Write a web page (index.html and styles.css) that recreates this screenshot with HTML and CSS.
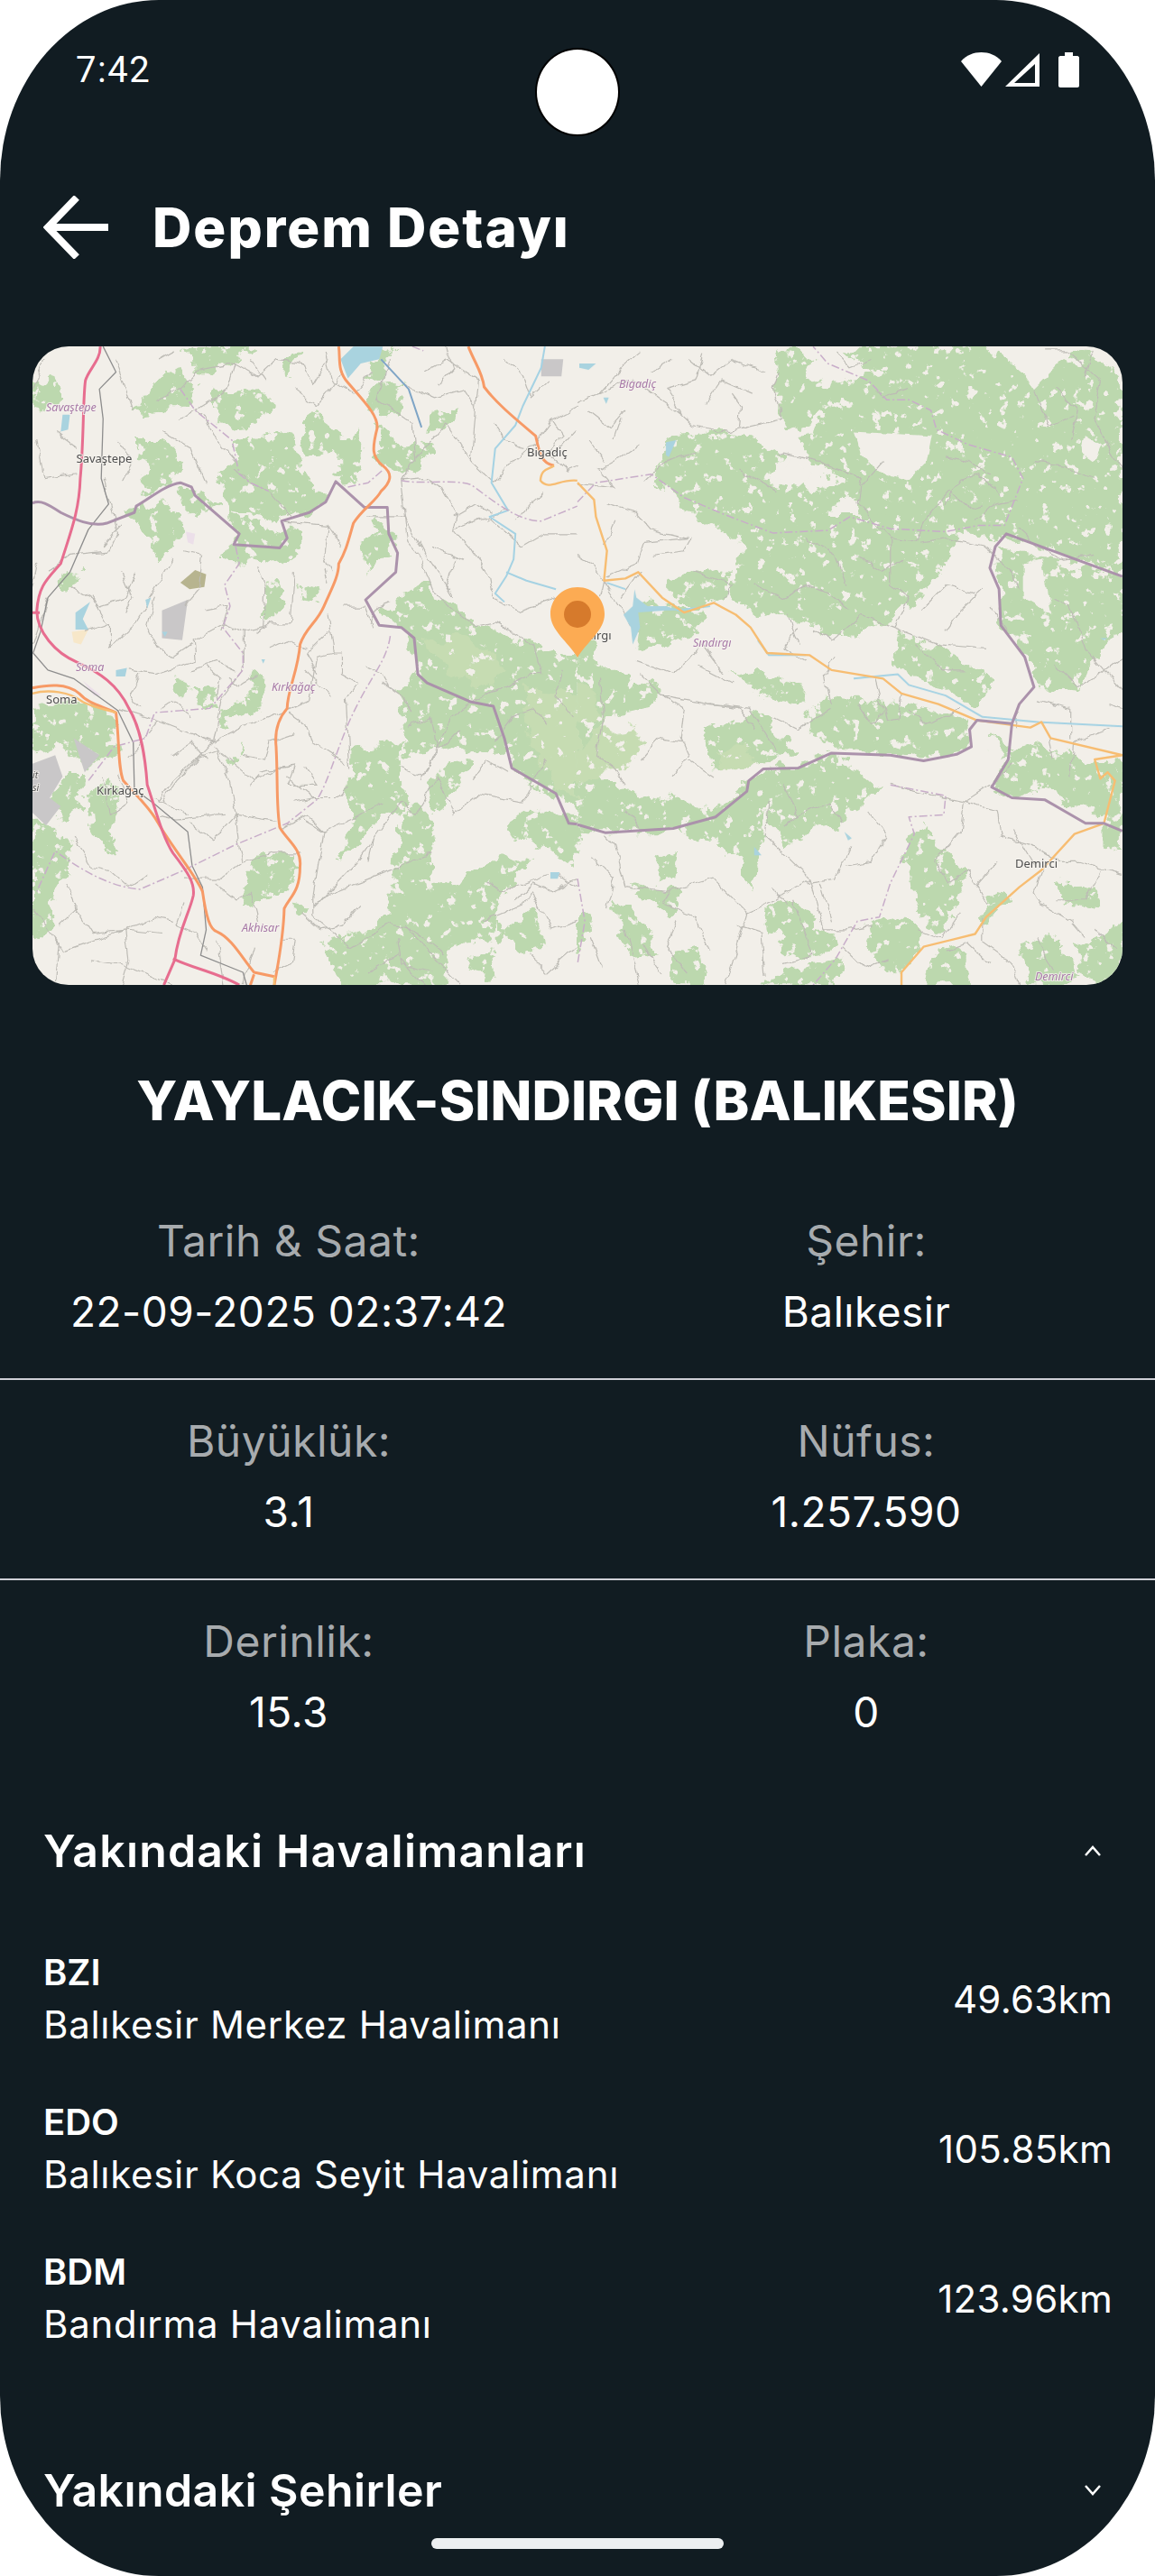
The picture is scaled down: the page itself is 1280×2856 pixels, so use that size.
FILE: index.html
```html
<!DOCTYPE html>
<html lang="tr">
<head>
<meta charset="utf-8">
<title>Deprem Detayı</title>
<link rel="stylesheet" href="styles.css">
</head>
<body>
<main class="screen">
  <header class="status">
    <span class="clock">7:42</span>
    <div class="status-icons">
      <svg class="ic-wifi" viewBox="0 0 45 38"><path d="M0 10C6 3 14 0 22.500 0S39 3 45 10L22.500 38Z"/></svg>
      <svg class="ic-signal" viewBox="0 0 38 37"><path fill-rule="evenodd" d="M38 0V37H0ZM33 12 10 33H33Z"/></svg>
      <svg class="ic-battery" viewBox="0 0 23 39"><path d="M7 0H16V4H21C22 4 23 5 23 6V37C23 38 22 39 21 39H2C1 39 0 38 0 37V6C0 5 1 4 2 4H7Z"/></svg>
    </div>
  </header>
  <div class="punch"></div>

  <nav class="appbar">
    <svg class="back" viewBox="0 0 72 70"><path d="M72 35H6M37 2 5 35 37 68"/></svg>
    <h1 class="appbar-title">Deprem Detayı</h1>
  </nav>

  <section class="map">
    <svg class="map-svg" viewBox="0 0 1208 708" preserveAspectRatio="none">
      <defs>
        <filter id="rough" x="-2%" y="-2%" width="104%" height="104%">
          <feTurbulence type="fractalNoise" baseFrequency="0.05" numOctaves="4" seed="7" result="n"/>
          <feDisplacementMap in="SourceGraphic" in2="n" scale="26" xChannelSelector="R" yChannelSelector="G" result="d"/>
          <feTurbulence type="fractalNoise" baseFrequency="0.085" numOctaves="4" seed="3" result="h"/>
          <feColorMatrix in="h" type="matrix" values="0 0 0 0 0 0 0 0 0 0 0 0 0 0 0 0 0 0 -16 11.300" result="m"/>
          <feComposite in="d" in2="m" operator="in"/>
          <feGaussianBlur stdDeviation="0.4"/>
        </filter>
        <filter id="wobble" x="-2%" y="-2%" width="104%" height="104%">
          <feTurbulence type="fractalNoise" baseFrequency="0.07" numOctaves="2" seed="11" result="n"/>
          <feDisplacementMap in="SourceGraphic" in2="n" scale="9" xChannelSelector="R" yChannelSelector="G"/>
          <feGaussianBlur stdDeviation="0.35"/>
        </filter>
        <filter id="soft" x="-2%" y="-2%" width="104%" height="104%">
          <feGaussianBlur stdDeviation="0.45"/>
        </filter>
      </defs>
      <rect class="m-land" width="1208" height="708"/>

      <!-- forests -->
      <g class="m-forest" filter="url(#rough)">
        <g transform="translate(-36 -14) scale(.408 .472)">
          <path d="M88 110 150 105 165 150 120 190 88 185ZM505 40 560 30 690 30 660 60 590 90 530 85 525 60ZM765 60 820 50 790 100 765 85ZM1000 70 1070 30 1040 100 990 110ZM450 80 510 100 530 140 490 180 360 190 400 140ZM580 135 700 130 750 170 690 215 620 220 570 170ZM850 180 930 230 900 280 830 300 820 220ZM1040 110 1100 120 1070 190 1010 185 1010 140ZM360 250 440 250 500 300 470 340 390 380 380 340 400 310ZM640 250 790 225 810 300 860 370 880 380 830 420 770 430 720 440 620 420 595 350 590 320 635 300ZM910 250 980 230 990 300 950 350 910 330ZM1020 210 1100 270 1160 250 1165 290 1100 330 1020 290ZM1170 190 1235 180 1200 225 1165 235ZM480 360 550 370 595 400 530 430 490 400ZM330 420 440 395 490 430 480 490 430 540 410 480ZM620 420 700 460 760 450 820 480 810 520 770 540 600 525 640 480ZM975 490 1030 440 1060 470 1070 515 990 555ZM725 580 775 600 745 670 720 670ZM805 585 860 600 865 630 820 625ZM170 570 215 550 210 575 175 600Z"/>
          <path d="M1040 660 1090 610 1170 580 1180 610 1290 680 1360 700 1440 730 1568 760 1568 1120 1510 1090 1400 1020 1370 980 1290 990 1200 970 1100 990 1085 870 1130 790 1095 700ZM955 970 1090 960 1100 1110 1010 1160 960 1210 920 1240 950 1160ZM1075 830 1130 800 1160 850 1090 880ZM1160 1050 1240 1000 1280 1010 1180 1130ZM1090 1120 1160 1120 1180 1200 1170 1300 1250 1280 1350 1230 1440 1230 1350 1340 1330 1420 1220 1440 1210 1530 930 1530 870 1420 1020 1400 1060 1340ZM1380 1140 1420 1120 1568 1130 1568 1250 1510 1230 1400 1190Z"/>
          <path d="M88 880 220 860 310 900 320 980 240 1020 170 970 88 985ZM170 1040 230 1040 225 1110 165 1150 135 1100ZM235 1080 300 1040 320 1100 300 1170 330 1210 290 1220 240 1140ZM88 1150 150 1150 205 1230 130 1340 160 1400 88 1420ZM680 1235 810 1215 805 1290 720 1330 650 1355ZM480 810 525 830 490 855 470 845ZM680 800 715 810 720 880 660 900 600 920 590 890 680 860ZM530 830 590 830 590 880 550 890ZM620 1000 660 960 645 1000 630 1010ZM1380 1410 1450 1350 1480 1430 1400 1450ZM1270 1470 1330 1440 1340 1510 1280 1500ZM1340 1370 1380 1410 1350 1440ZM780 1340 830 1345 800 1365Z"/>
        </g>
        <g transform="translate(604 -14) scale(.408 .472)">
          <path d="M250 240 290 235 480 240 560 295 515 350 640 370 740 345 690 430 800 430 830 370 960 350 1000 370 1130 380 1130 430 1200 450 1130 490 1100 470 1060 460 990 540 930 620 880 650 840 680 700 720 620 680 520 650 470 665 415 625 430 540 440 480 380 460 290 420 205 335ZM540 30 640 60 620 100 680 130 670 190 570 230 545 200 545 130Z"/>
          <path d="M650 130 800 90 720 30 1110 30 1240 90 1380 35 1480 110 1480 570 1160 470 1100 470 940 450 760 420 720 350 640 300 600 250 670 200ZM1140 510 1480 570 1480 690 1400 770 1370 840 1250 830 1215 760 1150 680 1145 600ZM870 700 980 735 1060 770 1130 820 1080 880 1000 840 900 800 860 760ZM620 890 700 850 800 870 900 870 1060 905 1060 975 900 990 700 975 650 940ZM410 800 500 790 610 830 600 870 530 860ZM0 800 70 770 120 810 220 830 200 880 60 900 0 900ZM0 600 60 770 30 800 0 780Z"/>
          <path d="M0 1000 130 1080 380 1110 460 1060 490 1030 700 990 830 1070 700 1150 560 1200 550 1180 520 1120 500 1220 470 1310 430 1240 370 1190 280 1170 0 1170ZM340 930 500 890 560 950 600 990 380 1030 370 980ZM1120 940 1150 1000 1250 960 1420 1010 1480 1000 1480 1170 1430 1200 1430 1140 1260 1070 1170 1090 1130 1065 1180 980ZM890 1210 930 1155 990 1200 1060 1260 1000 1400 960 1400 900 1300ZM220 1230 275 1210 265 1280 210 1290ZM90 1330 140 1340 230 1450 130 1460ZM0 1360 40 1370 20 1440 0 1450ZM140 1290 280 1310 250 1370 170 1320ZM510 1340 590 1330 700 1440 600 1470 520 1410ZM780 1380 880 1360 940 1420 880 1500 790 1470ZM260 1460 330 1450 350 1530 260 1530ZM950 1530 970 1450 1050 1440 1060 1530ZM1200 1430 1300 1420 1370 1500 1320 1530 1230 1530ZM1350 1440 1480 1380 1480 1500 1400 1530ZM1290 1290 1400 1300 1420 1350 1330 1340ZM1430 1160 1480 1170 1480 1215 1430 1210ZM490 1530 600 1490 720 1470 700 1530ZM250 570 410 545 420 590 370 640 290 640 260 600ZM170 620 230 650 340 650 330 700 170 740 150 720ZM1090 1370 1140 1310 1180 1320 1110 1390ZM0 900 60 900 60 1010 0 1010Z"/>
        </g>
      </g>

      <!-- clearings and paler woodland -->
      <g class="m-clear" filter="url(#wobble)">
        <g transform="translate(604 -14) scale(.408 .472)">
          <path d="M750 230 960 240 945 305 900 345 810 320 770 280ZM1210 540 1260 530 1290 660 1210 620ZM1130 30 1210 90 1240 130 1320 60 1300 30ZM1380 240 1420 260 1400 300 1370 280ZM530 340 590 290 640 330 600 360Z"/>
        </g>
      </g>
      <g class="m-pale" filter="url(#rough)">
        <g transform="translate(-36 -14) scale(.408 .472)">
          <path d="M1150 720 1270 710 1380 790 1340 830 1220 800ZM1430 830 1568 850 1568 1090 1500 1060 1450 980Z"/>
        </g>
        <g transform="translate(604 -14) scale(.408 .472)">
          <path d="M0 810 40 830 50 900 0 920ZM60 930 130 920 190 960 160 1010 70 1020 30 1060 0 1050 0 990ZM390 980 470 960 480 1010 385 1030Z"/>
        </g>
      </g>

      <g class="m-urban" filter="url(#soft)">
        <g transform="translate(-36 -14) scale(.408 .472)">
          <path d="M88 1010 150 990 170 1040 135 1090 165 1110 125 1155 88 1125ZM200 950 270 990 230 1030ZM1470 60 1530 60 1525 100 1470 100ZM440 650 510 625 495 720 440 715Z"/>
          <path class="m-olive" d="M490 585 530 555 560 565 555 595 515 600Z"/>
          <path class="m-pinkish" d="M505 465 530 470 525 495 510 490ZM225 815 275 850 255 850Z"/>
          <path class="m-sand" d="M195 700 240 695 220 730 200 725Z"/>
        </g>
      </g>

      <!-- minor roads -->
      <g class="m-minor" filter="url(#wobble)">
        <g transform="translate(-36 -14) scale(.408 .472)">
          <path d="M280 340 320 470 300 510 190 520 130 560M100 250 120 340 210 330M420 160 490 130 540 85 640 70 700 100 750 60 830 70 850 120 890 60M530 180 560 200 590 250 640 300M640 70 620 130 490 200M280 500 330 450M470 530 430 590 360 690 300 740M700 545 720 600 715 690 660 700 660 790 600 860 580 960 480 1050 440 1100 420 1090M660 700 610 680 525 720 530 770 420 800 350 790M800 560 790 680 740 680 700 700M880 550 890 590M890 660 905 750 930 750 930 800 970 820 940 860 950 1020M1000 680 1030 640 1060 630M905 750 860 760 840 860 790 880 670 920 580 960M780 890 830 920 850 960 940 1010M580 970 690 1050 760 1020 800 1015 780 1060 860 1060 830 1020M610 1130 480 1140 430 1130M640 1130 750 1145M640 1130 650 1210 660 1240 600 1280 500 1280M880 1170 850 1320 850 1370 950 1440 1060 1385 1120 1400 1210 1460M1170 1220 1000 1280 880 1320 850 1350M1090 1020 1150 1040 1230 900 1290 860 1440 800 1470 800M1470 800 1450 730 1350 680 1290 690 1220 640 1180 610 1140 520 1110 490 1090 345 1160 340 1200 360 1240 420 1230 460 1280 510 1330 570 1340 620 1410 650 1520 620M1230 460 1330 430 1420 500 1480 470 1568 470M1090 345 1130 290 1210 210 1280 300 1340 350 1390 300 1450 260 1500 200 1568 170M1130 300 1120 210 1020 150 1060 60M1280 300 1300 110 1210 60 1150 90M1500 200 1530 240 1490 280M1480 1000 1420 1100 1300 1080 1230 1130 1190 1040 1130 1130 1090 1100 1010 1190 1000 1240M1010 1190 970 1240 850 1350M1310 1380 1420 1340 1440 1310 1500 1400 1568 1380M1250 1530 1100 1390M1490 1270 1400 1300 1370 1310 1320 1290M150 1420 170 1450 340 1400 420 1370 470 1380M200 1340 250 1410 340 1400 350 1470 330 1530M470 1530 330 1480 250 1470M340 1400 440 1410M590 1420 610 1530M770 1420 800 1420 790 1480 740 1500M690 1440 660 1530M100 540 88 590M130 620 88 730M320 880 430 910 580 960M350 1000 430 910M430 1100 470 1050 530 1000 590 980M440 1100 510 1130M640 1130 620 1040 590 980M700 1040 680 1060M700 1030 800 1015M780 1040 850 1090M90 1350 160 1430 150 1530M1170 500 1260 530M1320 440 1380 410M1520 1270 1568 1300"/>
          <path d="M310 60 340 130 360 180M120 60 90 130M150 230 210 270M320 250 360 300 330 350M430 60 470 40M440 230 520 270 560 350M680 60 720 110M800 130 860 170 900 130 930 90M880 40 900 110 960 140 1010 90M640 320 680 350 730 370 790 430M760 440 890 450 930 500M890 450 880 520 900 560M1000 430 1100 430 1150 510 1220 600M1240 530 1210 590 1230 620M1340 420 1290 400 1230 430M1400 440 1440 400 1480 370M1100 120 1180 150 1260 130 1290 170M1370 60 1420 100 1440 150 1490 110M1560 230 1500 290 1540 320 1568 310M1420 270 1370 250 1340 210M1210 30 1230 80 1190 120M330 560 360 620 340 660M250 620 290 680M190 590 270 640 340 620 370 560M500 510 550 520 540 600 500 640M560 650 620 640 600 700M420 620 400 690 430 740M230 700 300 680 300 740M380 800 350 850 380 880M420 730 470 760 520 730M520 790 590 770 640 790M560 780 600 810 590 860M620 810 650 830 700 800M730 740 780 720 830 740M890 700 830 750 860 800M830 790 900 850M990 780 1040 800 1060 830M930 640 990 640 1010 690M1040 820 1090 850 1120 890M1110 920 1170 900 1190 980 1250 930M1190 980 1140 1050M1280 1050 1320 1000 1380 1030M1490 920 1450 880 1390 900 1340 960M1530 790 1510 850 1560 900M520 900 470 860 440 880M560 1000 520 960 470 990M660 990 720 1000 730 960 800 940M800 1100 850 1090 920 1090 950 1060M820 1140 880 1170 960 1140 1040 1100M770 1160 830 1130 880 1170M520 1150 580 1190 640 1130M660 1240 740 1220 820 1220M580 1290 640 1330 680 1310 700 1380M820 1360 870 1400 930 1390 980 1340M1080 1420 1090 1480 1180 1500M1400 1330 1450 1290 1500 1310 1568 1280M1440 1460 1490 1500 1568 1440M1000 1500 1080 1460 1150 1530M500 1340 480 1390 530 1410 560 1450M200 1180 250 1250 300 1260 350 1300 400 1270M180 1290 210 1350 160 1390M320 1030 350 1100 300 1130 280 1040"/>
        </g>
        <g transform="translate(604 -14) scale(.408 .472)">
          <path d="M0 160 60 140 150 105 280 190 310 215 410 230 560 200 530 130 545 90M60 140 130 70 170 40M120 200 100 250M170 260 100 300 60 320 100 360 0 350M280 190 270 170 240 130 320 110 340 50M420 140 445 170 440 220M80 400 160 420 200 460 300 480 180 490 160 540 80 570M0 520 40 540 70 580 60 620M70 580 130 660 150 690M320 560 420 590 400 620M550 280 660 300 770 340 760 400 850 480 920 490 940 440M930 490 1000 480 1100 500 1170 550 1200 600M850 480 850 590 900 620 860 690 980 730 1110 740M860 690 770 660 690 720 640 700M570 660 600 730M160 770 260 800 300 770 340 730 400 800M170 800 230 850 370 870 470 880 540 980M230 850 290 880 280 950 300 990 260 1040M60 810 70 900 50 990 110 1030 130 1060M170 1000 220 950 290 960M340 870 440 880 480 930M700 760 670 800 690 870M810 810 840 910 870 905 880 850M520 1100 510 1180 560 1220 630 1280 670 1400 730 1400 800 1390M630 1280 540 1330 460 1360 420 1480 400 1530M460 1360 370 1280 240 1310 130 1300 100 1200 75 1175M250 1310 230 1340 320 1370 360 1450M130 1400 150 1470 170 1530M660 1290 690 1380M585 1330 640 1460 560 1480M850 1060 1050 1100 1120 1060 1180 1010M1050 1100 1040 1170 970 1240 1010 1290 1060 1260 1110 1340M1050 1100 1140 1120 1150 1180 1230 1200 1310 1240 1360 1240 1480 1270M1260 1260 1240 1310 1260 1340 1340 1380 1380 1420M1100 1370 1100 1430 1180 1480 1200 1530M1340 1040 1350 960 1440 930M1280 950 1290 1000M1190 920 1200 890M1290 620 1340 640 1380 740 1480 840M1480 320 1400 200 1420 110 1330 40 1270 40M1240 130 1280 220 1350 190M1380 100 1400 40M1080 440 1130 400 1200 390M940 440 1010 370 1060 410 1100 400M810 130 830 150 900 130"/>
          <path d="M30 180 90 220 130 180M200 90 260 60M300 60 360 100 420 60 510 90M350 160 390 110 470 140M30 250 70 300M180 350 240 300 320 280M100 440 70 500M210 520 290 510 310 480M120 620 170 560M440 320 540 370M480 590 560 620 620 590 680 610M600 690 560 740 620 770M330 780 420 820M530 900 600 930 690 880M760 870 800 920 830 890M900 880 950 920 1040 880M920 730 990 790 1050 790M1100 600 1040 650 1000 700M1120 640 1170 700M1300 780 1360 830 1420 800 1480 760M1250 860 1340 880 1340 950M1440 870 1480 880M760 520 830 560 880 530M620 480 700 520 730 590M660 600 740 650M930 650 1000 590 1080 610M1000 400 1040 340 1090 330 1150 380M1000 290 1060 300 1120 330M700 40 740 80 800 60M830 300 770 360M1300 130 1360 180 1340 250M1240 300 1320 310 1400 340M1200 460 1250 500 1320 530 1400 520M560 1060 600 1130 560 1160M600 1130 680 1100 720 1150M740 1200 700 1280 620 1290M790 1120 840 1180 800 1240 730 1250M570 1340 520 1300M720 1440 780 1490 840 1470M930 1400 990 1420 1040 1360M1000 1450 1060 1430 1120 1480M1140 1240 1080 1300M1180 1160 1240 1250M1300 1330 1380 1330 1420 1260M1400 1400 1460 1440M1250 1420 1290 1500M300 1000 370 1040M130 1120 180 1170M40 1230 100 1280 80 1350M270 1380 240 1440 300 1500M430 1390 500 1410 510 1510M180 1430 230 1500M40 1420 70 1490"/>
        </g>
      </g>

      <!-- water -->
      <g filter="url(#soft)">
        <g transform="translate(-36 -14) scale(.408 .472)">
          <path class="m-lake" d="M925 60 960 30 1040 30 1030 60 980 70 945 105ZM170 190 190 190 185 225 165 230ZM205 655 245 630 225 670 240 695 205 695ZM395 625 410 620 400 645ZM315 790 345 785 340 805 315 805ZM710 765 720 765 715 775ZM1495 1265 1520 1265 1515 1280 1495 1280ZM440 700 455 700 448 712Z"/>
          <path class="m-river" d="M1480 30 1470 80 1420 170 1400 215 1345 270 1335 350 1380 415 1330 430 1400 470 1395 530 1375 570 1345 610 1370 630M1375 560 1430 580 1510 600"/>
          <path class="m-river-dark" d="M1035 60 1110 130 1145 220"/>
        </g>
        <g transform="translate(604 -14) scale(.408 .472)">
          <path class="m-lake" d="M155 600 150 640 125 660 145 690 150 730 170 690 165 655 240 650 280 650 240 640 190 640 160 620ZM240 255 268 250 248 290 240 285ZM5 70 50 70 30 85 5 80ZM70 150 85 150 78 165ZM1420 715 1440 715 1430 720ZM480 1205 500 1225 480 1225ZM725 1170 745 1185 735 1190Z"/>
          <path class="m-river" d="M80 585 130 600M270 650 360 640M490 720 520 755 620 755M750 810 870 800 900 825 1000 850 1100 900 1250 912 1480 922"/>
        </g>
      </g>

      <!-- railway, boundaries, main roads -->
      <g filter="url(#soft)">
        <g transform="translate(-36 -14) scale(.408 .472)">
          <path class="m-rail" d="M280 30 315 90 270 130 280 200 275 340 295 400 240 460 190 560 130 620 110 700 90 750 130 790 200 810 320 885 362 960 365 1070 420 1105 510 1170 522 1250 550 1300 560 1400 545 1460 660 1500 670 1530"/>
          <path class="m-admin" d="M1090 345C1150 355 1230 340 1280 355 1330 385 1400 440 1470 440L1568 405M640 500 650 540 610 590 625 640 605 690 660 750 660 790 570 880 420 890 395 950 310 970 240 1050M1060 710C1050 770 1010 800 960 890 920 960 890 1060 860 1095L780 1150 640 1200 500 1260 380 1305C300 1300 220 1260 150 1215L100 1310M490 130 530 180 630 250 650 330 680 350 730 370M945 360 1000 350 1040 320M1120 30 1150 40"/>
          <path class="m-border" d="M88 398C110 390 130 400 165 420 200 435 250 455 290 445L365 420 370 405C410 385 450 355 490 350L520 360 530 380 650 470 635 495 760 503 780 480 765 440 840 420 885 395 912 347 990 408 1052 408 1056 470 1080 515 1075 560 993 625 1030 685 1090 690 1125 715 1135 800 1160 820 1280 865 1340 875 1370 950 1390 1020 1510 1080 1545 1150 1568 1152"/>
          <path class="m-primary" d="M920 30C925 60 915 85 945 115 990 160 1025 190 1025 220 1010 270 1010 290 1040 310 1070 330 1060 350 1035 370 1020 395 985 410 960 445 945 490 940 510 920 540 920 570 900 600 880 640 860 680 830 690 815 730 810 790 780 840 780 880 760 900 745 930 750 970 755 1050 750 1110 760 1160 780 1190 820 1210 815 1250 815 1310 790 1320 772 1350 770 1420 755 1480 745 1530"/>
          <path class="m-primary" d="M1272 30C1290 70 1310 90 1315 125 1350 165 1400 200 1455 240 1465 280 1470 305 1505 310"/>
          <path class="m-primary" d="M88 832C130 825 180 820 215 845 240 870 280 875 315 890 325 960 320 1020 335 1050 370 1085 405 1110 430 1150 470 1210 530 1270 550 1310 560 1370 570 1400 590 1405 630 1420 660 1470 690 1500L745 1510M690 1505 680 1530"/>
          <path class="m-peach" d="M88 845C130 835 190 840 225 865 260 880 280 880 315 890M1505 310C1490 320 1470 315 1468 345 1490 370 1520 340 1568 345M745 1510V1530"/>
          <path class="m-motorway" d="M272 30C275 60 240 85 232 110 225 150 228 250 218 340 215 420 190 470 165 540 130 575 105 590 100 650 100 700 150 750 210 772 270 795 320 825 350 880 385 930 395 1000 400 1060 420 1110 440 1180 470 1220 510 1265 530 1290 525 1320 515 1360 485 1400 475 1470L445 1530M470 1468C520 1490 590 1500 650 1530M88 655H108"/>
        </g>
        <g transform="translate(604 -14) scale(.408 .472)">
          <path class="m-admin" d="M0 395 50 350 200 330 290 385 400 425 530 468 680 462 740 430 850 458 1000 465 1090 450 1160 450 1210 340 1180 290 1060 260 975 225 960 180 900 155 840 155 790 110 680 70 640 30M850 1060 1000 1085 995 1130 900 1135 915 1175 850 1290 820 1370 760 1380 700 1470 640 1530M0 1280 20 1380 0 1480"/>
          <path class="m-peach" d="M0 350 45 390 50 430 80 510 72 580 130 575 165 560 230 620 290 655 370 632 430 660 470 690 515 750 630 755 690 790 830 810 880 845 980 870 1085 908 1230 925 1260 912 1285 950 1480 990 1405 1000 1420 1045 1440 1030 1460 1050 1430 1150 1350 1175 1260 1260 1200 1300 1110 1370 1080 1410 940 1440 880 1500V1530"/>
          <path class="m-border" d="M0 1153 75 1172 260 1162 375 1135 460 1075 465 1050 505 1022 600 1020 690 985 850 990 940 1003 1030 988 1070 970 1065 930 1085 908 1180 916 1200 870 1240 830 1215 760 1150 685 1145 600 1120 550 1135 500 1165 470 1480 570M1180 916 1170 1000 1125 1065 1180 1090 1270 1095 1380 1150 1430 1150 1480 1168"/>
        </g>
        <g class="m-label">
          <text class="m-place" x="15" y="72">Savaştepe</text>
          <text class="m-town" x="48.500" y="129">Savaştepe</text>
          <text class="m-town" x="548" y="121.500">Bigadiç</text>
          <text class="m-place" x="48" y="360">Soma</text>
          <text class="m-town" x="15" y="396">Soma</text>
          <text class="m-place" x="265" y="381.500">Kırkağaç</text>
          <text class="m-town" x="71" y="497">Kırkağaç</text>
          <text class="m-place" x="232" y="649">Akhisar</text>
          <text class="m-tiny" x="0" y="479">it</text>
          <text class="m-tiny" x="0" y="493">si</text>
          <text class="m-place" x="650" y="45.500">Bigadiç</text>
          <text class="m-town m-end" x="641.500" y="325">Sındırgı</text>
          <text class="m-place" x="732" y="333">Sındırgı</text>
          <text class="m-town" x="1089" y="577.500">Demirci</text>
          <text class="m-place" x="1111" y="702.500">Demirci</text>
        </g>
      </g>

      <!-- marker -->
      <path class="m-pin" d="M604 267C587 267 574 280 574 297 574 315 594 328 604 345 614 328 634 315 634 297 634 280 621 267 604 267Z"/>
      <circle class="m-pin-dot" cx="604" cy="297" r="15"/>
    </svg>
  </section>

  <h2 class="place-title">YAYLACIK-SINDIRGI (BALIKESIR)</h2>

  <section class="facts">
    <div class="fact-row">
      <div class="fact"><span class="fact-label">Tarih &amp; Saat:</span><span class="fact-value">22-09-2025 02:37:42</span></div>
      <div class="fact"><span class="fact-label">Şehir:</span><span class="fact-value">Balıkesir</span></div>
    </div>
    <div class="fact-row">
      <div class="fact"><span class="fact-label">Büyüklük:</span><span class="fact-value">3.1</span></div>
      <div class="fact"><span class="fact-label">Nüfus:</span><span class="fact-value">1.257.590</span></div>
    </div>
    <div class="fact-row">
      <div class="fact"><span class="fact-label">Derinlik:</span><span class="fact-value">15.3</span></div>
      <div class="fact"><span class="fact-label">Plaka:</span><span class="fact-value">0</span></div>
    </div>
  </section>

  <section class="accordion">
    <div class="acc-head">
      <h3 class="acc-title">Yakındaki Havalimanları</h3>
      <svg class="chev" viewBox="0 0 20 14"><path d="M2 12 10 3 18 12"/></svg>
    </div>
    <ul class="airports">
      <li class="airport">
        <div class="airport-text"><strong class="code">BZI</strong><span class="airport-name">Balıkesir Merkez Havalimanı</span></div>
        <span class="dist">49.63km</span>
      </li>
      <li class="airport">
        <div class="airport-text"><strong class="code">EDO</strong><span class="airport-name">Balıkesir Koca Seyit Havalimanı</span></div>
        <span class="dist">105.85km</span>
      </li>
      <li class="airport">
        <div class="airport-text"><strong class="code">BDM</strong><span class="airport-name">Bandırma Havalimanı</span></div>
        <span class="dist">123.96km</span>
      </li>
    </ul>
    <div class="acc-head acc-head-closed">
      <h3 class="acc-title acc-title-tight">Yakındaki Şehirler</h3>
      <svg class="chev" viewBox="0 0 20 14"><path d="M2 2 10 11 18 2"/></svg>
    </div>
  </section>

  <div class="home-bar"></div>
</main>
</body>
</html>
```

FILE: styles.css
```css
* { box-sizing: border-box; margin: 0; padding: 0; }
html, body { background: #fff; }
body { width: 1280px; height: 2856px; overflow: hidden; }

.screen {
  position: relative;
  width: 1280px;
  height: 2856px;
  background: #111c22;
  border-radius: 176px / 200px;
  overflow: hidden;
  color: #fff;
  font-family: Inter, "Noto Sans", sans-serif;
}

/* status bar */
.status {
  height: 110px;
  padding: 56px 84px 0 84px;
  display: flex;
  justify-content: space-between;
  align-items: flex-start;
}
.clock { font: 400 40px/44px Roboto, sans-serif; letter-spacing: 1.500px; }
.status-icons { display: flex; align-items: flex-start; gap: 4px; margin-top: 2px; }
.status-icons svg { display: block; fill: #fff; }
.ic-wifi { width: 45px; height: 38px; }
.ic-signal { width: 38px; height: 37px; margin-top: 1px; }
.ic-battery { width: 23px; height: 39px; margin-left: 17px; }
.punch {
  position: absolute;
  left: 593px;
  top: 53px;
  width: 94px;
  height: 98px;
  border-radius: 50%;
  background: #fff;
  border: 2px solid #000;
}

/* app bar */
.appbar {
  height: 274px;
  padding: 72px 0 0 48px;
  display: flex;
  align-items: flex-start;
  gap: 49px;
}
.back { width: 72px; height: 70px; margin-top: 35px; flex: none; }
.back path { fill: none; stroke: #fff; stroke-width: 8; }
.appbar-title { font-size: 60px; line-height: 68px; font-weight: 800; letter-spacing: 2px; margin-top: 36px; }

/* map */
.map { margin: 0 36px; height: 708px; border-radius: 40px; overflow: hidden; }
.map-svg { display: block; width: 1208px; height: 708px; }
.map-svg path { vector-effect: non-scaling-stroke; }
.m-land { fill: #f2efe9; }
.m-forest { fill: #bcd8ae; }
.m-clear { fill: #f2efe9; }
.m-pale { fill: #c6dcb2; }
.m-urban { fill: #c9c7c8; }
.m-olive { fill: #b7b48f; }
.m-pinkish { fill: #ecdfe9; }
.m-sand { fill: #f7e7c9; }
.m-lake { fill: #a9d3df; }
.m-minor path { fill: none; stroke: #bdbbb5; stroke-width: 1.200; }
.m-river, .m-river-dark, .m-rail, .m-admin, .m-border, .m-primary, .m-peach, .m-motorway { fill: none; stroke-linejoin: round; }
.m-river { stroke: #a5d2e3; stroke-width: 2; }
.m-river-dark { stroke: #7fa5c6; stroke-width: 2; }
.m-rail { stroke: #8d8d8d; stroke-width: 1.300; }
.m-admin { stroke: #c8adc9; stroke-width: 1.500; stroke-dasharray: 9 3 2 3; }
.m-border { stroke: #ab92ab; stroke-width: 3; }
.m-primary { stroke: #f79a66; stroke-width: 3; }
.m-peach { stroke: #f7bd72; stroke-width: 2.400; }
.m-motorway { stroke: #e76d8f; stroke-width: 3; }
.m-label text { font-family: "Noto Sans", sans-serif; paint-order: stroke; stroke: #f5f3ee; stroke-width: 2px; stroke-opacity: .8; }
.m-place { font-size: 12.500px; font-style: italic; fill: #a779a7; }
.m-town { font-size: 13px; fill: #4d4d4d; }
.m-end { text-anchor: end; }
.m-tiny { font-size: 10.500px; font-style: italic; fill: #555; }
.m-pin { fill: #fcab53; }
.m-pin-dot { fill: #d67a2c; }

/* title */
.place-title { margin-top: 90px; text-align: center; font-size: 60px; line-height: 76px; font-weight: 800; letter-spacing: .1px; }

/* facts */
.facts { margin-top: 50px; }
.fact-row {
  height: 222px;
  padding-top: 30px;
  display: grid;
  grid-template-columns: 640px 640px;
  border-bottom: 2px solid #cfcfd6;
}
.fact-row:last-child { border-bottom: 0; }
.fact { display: flex; flex-direction: column; align-items: center; }
.fact-label { font-size: 48px; line-height: 76px; font-weight: 400; color: #a7abae; letter-spacing: .5px; }
.fact-value { font-size: 46px; line-height: 80px; font-weight: 400; letter-spacing: .5px; }

/* accordion */
.accordion { padding: 0 47px 0 48px; margin-top: 43px; }
.acc-head { height: 70px; display: flex; align-items: center; justify-content: space-between; }
.acc-title { font-size: 50px; line-height: 70px; font-weight: 600; letter-spacing: 1.200px; }
.acc-title-tight { letter-spacing: .4px; }
.chev { width: 20px; height: 14px; margin-right: 12px; fill: none; stroke: #fff; stroke-width: 2.500; }
.airports { list-style: none; margin-top: 71px; }
.airport { height: 166px; display: flex; justify-content: space-between; align-items: flex-start; }
.airport-text { display: flex; flex-direction: column; }
.code { font-size: 40px; line-height: 58px; font-weight: 600; }
.airport-name { font-size: 42px; line-height: 58px; font-weight: 400; letter-spacing: .7px; }
.dist { font-size: 42px; line-height: 58px; margin-top: 30px; letter-spacing: .3px; }
.acc-head-closed { margin-top: 70px; }

/* gesture bar */
.home-bar {
  position: absolute;
  left: 478px;
  top: 2814px;
  width: 324px;
  height: 12px;
  border-radius: 6px;
  background: #eceff1;
}
```
